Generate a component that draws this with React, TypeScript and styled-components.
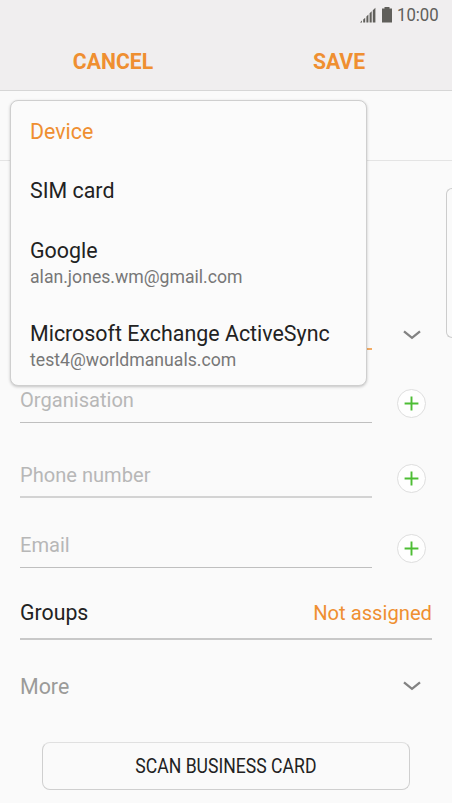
import React from "react";
import styled, { createGlobalStyle } from "styled-components";

const Global = createGlobalStyle`
  *, *::before, *::after { box-sizing: border-box; }
  body { margin: 0; background: #fafafa; font-family: Roboto, sans-serif; overflow: hidden; }
  button { font-family: inherit; border: 0; background: none; padding: 0; }
`;

const accent = "#ef8f31";

const Screen = styled.div`
  position: relative;
  display: flex;
  flex-direction: column;
  width: 452px;
  height: 803px;
  overflow: hidden;
  background: #fafafa;
  color: #222;
`;

const Header = styled.header`
  height: 91px;
  flex: none;
  background: #f0eeef;
  border-bottom: 1px solid #d6d6d6;
`;

const StatusBar = styled.div`
  display: flex;
  justify-content: flex-end;
  align-items: center;
  height: 30px;
  padding-right: 13px;
  color: #605f5b;
`;

const Clock = styled.span`
  width: 42px;
  margin-left: 4px;
  font-size: 19px;
  line-height: 30px;
  white-space: nowrap;
`;

const Squeeze = styled.span<{ $x: number; $origin?: string }>`
  display: inline-block;
  white-space: nowrap;
  transform: scaleX(${(p) => p.$x});
  transform-origin: ${(p) => p.$origin || "left"} center;
`;

const Actions = styled.div`
  display: grid;
  grid-template-columns: 1fr 1fr;
  height: 60px;
`;

const Action = styled.button`
  height: 62px;
  color: ${accent};
  font-size: 21.2px;
  font-weight: 700;
`;

const AccountRow = styled.div`
  height: 70px;
  flex: none;
  border-bottom: 1px solid #e4e4e4;
`;

const Form = styled.main`
  display: flex;
  flex-direction: column;
  padding: 0 20px;
`;

const Identity = styled.section`
  display: flex;
  height: 189px;
  margin-right: -20px;
`;

const NameField = styled.div`
  width: 352px;
  border-bottom: 2px solid #f3ac65;
`;

const NameToggle = styled.div`
  display: flex;
  flex-direction: column;
  justify-content: flex-end;
  width: 20px;
  margin-left: 30px;
  padding-bottom: 9px;
`;

const Photo = styled.div`
  width: 6px;
  height: 150px;
  margin-top: 27px;
  margin-left: auto;
  border: 1px solid #ccc;
  border-right: 0;
  border-radius: 10px 0 0 10px;
`;

const FieldRow = styled.div<{ $h: number }>`
  display: flex;
  align-items: flex-end;
  justify-content: space-between;
  height: ${(p) => p.$h}px;
  padding-right: 6px;
`;

const Field = styled.div<{ $double?: boolean }>`
  width: 352px;
  height: 36px;
  border-bottom: ${(p) => (p.$double ? "2px solid #d3d3d3" : "1px solid #bfbfbf")};
  color: #b7b7b7;
  font-size: 20.1px;
  line-height: 27px;
`;

const AddButton = styled.button`
  display: flex;
  align-items: center;
  justify-content: center;
  width: 29px;
  height: 29px;
  margin-bottom: 5px;
  border: 1px solid #dedede;
  border-radius: 50%;
  background: #fefefe;
`;

const GroupsRow = styled.div`
  display: flex;
  justify-content: space-between;
  height: 72px;
  padding-top: 31px;
  border-bottom: 2px solid #c8c8c8;
  font-size: 21.3px;
  line-height: 28px;
`;

const GroupValue = styled.span`
  color: ${accent};
  font-size: 20.2px;
`;

const MoreRow = styled.div`
  display: flex;
  align-items: center;
  justify-content: space-between;
  height: 92px;
  padding-right: 10px;
  color: #9b9b99;
  font-size: 21.4px;
`;

const ScanButton = styled.button`
  width: 368px;
  height: 48px;
  margin: 10px 0 0 22px;
  border: 1px solid #cfcfcf;
  border-top-color: #e0e0e0;
  border-radius: 8px;
  color: #222;
  font-size: 20px;
`;

const Menu = styled.div`
  position: absolute;
  left: 10px;
  top: 100px;
  width: 357px;
  height: 286px;
  padding: 0 19px;
  border: 1px solid #cfcfcf;
  border-radius: 8px;
  background: #fbfbfb;
  box-shadow: 0 1px 3px rgba(0, 0, 0, 0.22);
`;

const MenuItem = styled.div<{ $h: number; $selected?: boolean }>`
  height: ${(p) => p.$h}px;
  padding-top: 18px;
  color: ${(p) => (p.$selected ? accent : "#222")};
  font-size: 21.4px;
  line-height: 26px;
  white-space: nowrap;
`;

const Address = styled.div`
  color: #777;
  font-size: 17.65px;
  line-height: 26px;
`;

const Chevron = () => (
  <svg width="20" height="12" viewBox="0 0 20 12" fill="none" stroke="#828282" strokeWidth="2.3">
    <path d="M2 2.3 10 8.8 18 2.3" />
  </svg>
);

const Plus = () => (
  <svg width="15" height="15" viewBox="0 0 15 15" fill="none" stroke="#4dbd34" strokeWidth="1.9">
    <path d="M7.5 .6v13.8M.6 7.5h13.8" />
  </svg>
);

const Signal = () => (
  <svg width="16" height="16" viewBox="0 0 16 16" fill="#605f5b">
    <path d="M0 15.5 2 13.5v2zM3.2 15.5v-3l2-1.8v4.8zM6.4 15.5V9.4l2-1.9v8zM9.6 15.5V6.3l2.1-2v11.2zM12.8 15.5V3.2L15.4.8v14.7z" />
  </svg>
);

const Battery = () => (
  <svg width="10" height="16" viewBox="0 0 10 16" fill="#605f5b">
    <path d="M2.5 0h5v1.5H10v14H0v-14h2.5z" />
  </svg>
);

const StatusIcons = styled.div`
  display: flex;
  gap: 6px;
  margin-right: 1px;
`;

const fields = [
  { label: "Organisation", height: 73 },
  { label: "Phone number", height: 75, double: true },
  { label: "Email", height: 70 },
];

const accounts = [
  { name: "Device", height: 59, selected: true },
  { name: "SIM card", height: 60 },
  { name: "Google", address: "alan.jones.wm@gmail.com", height: 83 },
  { name: "Microsoft Exchange ActiveSync", address: "test4@worldmanuals.com", height: 82 },
];

export default function App() {
  return (
    <Screen>
      <Global />
      <Header>
        <StatusBar>
          <StatusIcons>
            <Signal />
            <Battery />
          </StatusIcons>
          <Clock><Squeeze $x={0.88}>10:00</Squeeze></Clock>
        </StatusBar>
        <Actions>
          <Action>CANCEL</Action>
          <Action>SAVE</Action>
        </Actions>
      </Header>
      <AccountRow />
      <Form>
        <Identity>
          <NameField />
          <NameToggle><Chevron /></NameToggle>
          <Photo />
        </Identity>
        {fields.map((f) => (
          <FieldRow key={f.label} $h={f.height}>
            <Field $double={f.double}>{f.label}</Field>
            <AddButton aria-label={`Add ${f.label}`}><Plus /></AddButton>
          </FieldRow>
        ))}
        <GroupsRow>
          <span>Groups</span>
          <GroupValue>Not assigned</GroupValue>
        </GroupsRow>
        <MoreRow>
          <span>More</span>
          <Chevron />
        </MoreRow>
        <ScanButton><Squeeze $x={0.88} $origin="center">SCAN BUSINESS CARD</Squeeze></ScanButton>
      </Form>
      <Menu>
        {accounts.map((a) => (
          <MenuItem key={a.name} $h={a.height} $selected={a.selected}>
            {a.name}
            {a.address && <Address>{a.address}</Address>}
          </MenuItem>
        ))}
      </Menu>
    </Screen>
  );
}
